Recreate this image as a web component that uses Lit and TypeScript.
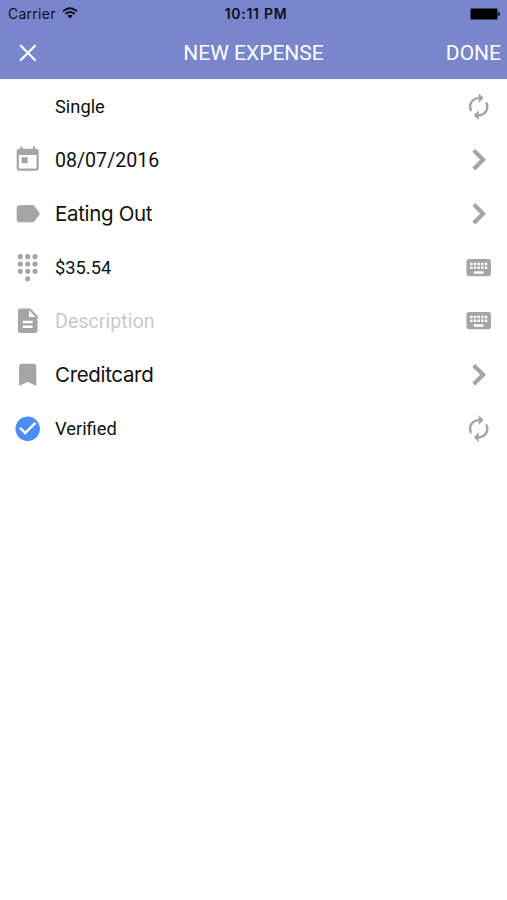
import { LitElement, html, css, svg } from "lit";
import { customElement, property } from "lit/decorators.js";

const ICONS: Record<string, string> = {
  today: "M19 3h-1V1.2h-1.8V3H7.8V1.2H6V3H5c-1.11 0-1.99.9-1.99 2L3 19c0 1.1.89 2 2 2h14c1.1 0 2-.9 2-2V5c0-1.1-.9-2-2-2zm.2 16.2H4.8V8.2h14.4v11zM7 10h5v5H7z",
  label: "M17.63 5.84C17.27 5.33 16.67 5 16 5L5 5.01C3.9 5.01 3 5.9 3 7v10c0 1.1.9 1.99 2 1.99L16 19c.67 0 1.27-.33 1.63-.84L22 12l-4.37-6.16z",
  dialpad: [[6, 3], [12, 3], [18, 3], [6, 9], [12, 9], [18, 9], [6, 15], [12, 15], [18, 15], [12, 21]]
    .map(([x, y]) => `M${x - 2.1} ${y}a2.1 2.1 0 1 0 4.2 0a2.1 2.1 0 1 0-4.2 0z`)
    .join(""),
  description: "M14 2H6c-1.1 0-1.99.9-1.99 2L4 20c0 1.1.89 2 1.99 2H18c1.1 0 2-.9 2-2V8l-6-6zm2 16H8v-2h8v2zm0-4H8v-2h8v2zm-3-5V3.5L18.5 9H13z",
  bookmark: "M17 3H7c-1.1 0-1.99.9-1.99 2L5 21l7-3 7 3V5c0-1.1-.9-2-2-2z",
  check: "M12 2C6.48 2 2 6.48 2 12s4.48 10 10 10 10-4.48 10-10S17.52 2 12 2zm-2 15l-5-5 1.41-1.41L10 14.17l7.59-7.59L19 8l-9 9z",
  keyboard: "M20 5H4c-1.1 0-1.99.9-1.99 2L2 17c0 1.1.9 2 2 2h16c1.1 0 2-.9 2-2V7c0-1.1-.9-2-2-2zm-9 3h2v2h-2V8zm0 3h2v2h-2v-2zM8 8h2v2H8V8zm0 3h2v2H8v-2zm-1 2H5v-2h2v2zm0-3H5V8h2v2zm9 7H8v-2h8v2zm0-4h-2v-2h2v2zm0-3h-2V8h2v2zm3 3h-2v-2h2v2zm0-3h-2V8h2v2z",
  renew: "M12 6v3l4-4-4-4v3c-4.42 0-8 3.58-8 8 0 1.57.46 3.03 1.24 4.26L6.7 14.8c-.45-.83-.7-1.79-.7-2.8 0-3.31 2.69-6 6-6zm6.76 1.74L17.3 9.2c.44.84.7 1.79.7 2.8 0 3.31-2.69 6-6 6v-3l-4 4 4 4v-3c4.42 0 8-3.58 8-8 0-1.57-.46-3.03-1.24-4.26z",
  chevron: "M9.2 3.2L6.8 5.6l6.4 6.4-6.4 6.4 2.4 2.4L18 12z",
};

@customElement("expense-icon")
export class ExpenseIcon extends LitElement {
  @property() name = "";
  static styles = css`
    :host { display: block; width: 29.4px; height: 29.4px; }
    svg { display: block; width: 100%; height: 100%; fill: currentColor; }
  `;
  render() {
    return html`<svg viewBox="0 0 24 24">${svg`<path d=${ICONS[this.name] ?? ""}></path>`}</svg>`;
  }
}

interface Row {
  icon: string;
  text: string;
  style: string;
  action: string;
}

const ROWS: Row[] = [
  { icon: "", text: "Single", style: "single", action: "renew" },
  { icon: "today", text: "08/07/2016", style: "date", action: "chevron" },
  { icon: "label", text: "Eating Out", style: "category", action: "chevron" },
  { icon: "dialpad", text: "$35.54", style: "amount", action: "keyboard" },
  { icon: "description", text: "Description", style: "placeholder", action: "keyboard" },
  { icon: "bookmark", text: "Creditcard", style: "account", action: "chevron" },
  { icon: "check", text: "Verified", style: "verified", action: "renew" },
];

@customElement("app-root")
export class AppRoot extends LitElement {
  static styles = css`
    :host { display: block; height: 900px; background: #fff; font-family: Roboto, sans-serif; color: #111; overflow: hidden; }
    header { height: 79px; background: #7986cb; }
    .status { height: 27px; display: grid; grid-template-columns: 1fr auto 1fr; align-items: center; padding: 0 6px 0 8px; font-family: Inter, sans-serif; color: #0c0f22; }
    .carrier { display: flex; align-items: center; gap: 6px; font-size: 13.8px; letter-spacing: 0.35px; }
    .wifi { display: block; width: 16px; height: 12px; margin-top: -2px; }
    .time { font-weight: 600; font-size: 14px; letter-spacing: 0.7px; margin-left: 3px; }
    .battery { justify-self: end; display: block; width: 31px; height: 12px; }
    .bar { height: 52px; display: grid; grid-template-columns: 18px 1fr 54px; align-items: center; padding: 0 6px 0 19px; color: #fff; font-size: 21px; }
    .close { display: block; width: 18px; height: 18px; }
    .title { justify-self: center; margin-left: 23px; }
    .done { justify-self: end; }
    .row { height: 53.7px; display: grid; grid-template-columns: 42px 1fr auto; align-items: center; padding: 0 13.5px 0 13px; }
    .row expense-icon { color: #a5a5a5; margin-top: 1px; }
    .row .check { color: #4a8df6; }
    .text { display: block; padding-top: 2px; font-size: 18.3px; line-height: 28px; white-space: nowrap; }
    .date { font-size: 19.6px; }
    .category, .account { font-family: Inter, sans-serif; font-size: 20.5px; letter-spacing: -0.33px; }
    .placeholder { color: #c9c9cd; font-size: 19.7px; }
  `;

  render() {
    return html`
      <header>
        <div class="status">
          <div class="carrier">
            <span>Carrier</span>
            <svg class="wifi" viewBox="0 0 16 12" fill="none" stroke="#0c0f22" stroke-width="1.9">
              <path d="M1 4.4Q8-1.9 15 4.4M3.4 7Q8 2.9 12.6 7"></path>
              <path d="M5.4 8.8Q8 6.7 10.6 8.8L8 11.5z" fill="#0c0f22" stroke="none"></path>
            </svg>
          </div>
          <span class="time">10:11 PM</span>
          <svg class="battery" viewBox="0 0 31 12">
            <rect x="0.5" y="0.5" width="27" height="11" rx="1.2"></rect>
            <path d="M28.3 4h.6q1 0 1 2t-1 2h-.6z"></path>
          </svg>
        </div>
        <div class="bar">
          <svg class="close" viewBox="0 0 18 18" stroke="#fff" stroke-width="2.2" stroke-linecap="round">
            <path d="M1.8 1.8L16 16M16 1.8L1.8 16"></path>
          </svg>
          <span class="title">NEW EXPENSE</span>
          <span class="done">DONE</span>
        </div>
      </header>
      <div class="list">
        ${ROWS.map(
          (r) => html`<div class="row">
            ${r.icon ? html`<expense-icon class=${r.icon} name=${r.icon}></expense-icon>` : html`<span></span>`}
            <span class="text ${r.style}">${r.text}</span>
            <expense-icon name=${r.action}></expense-icon>
          </div>`
        )}
      </div>
    `;
  }
}
